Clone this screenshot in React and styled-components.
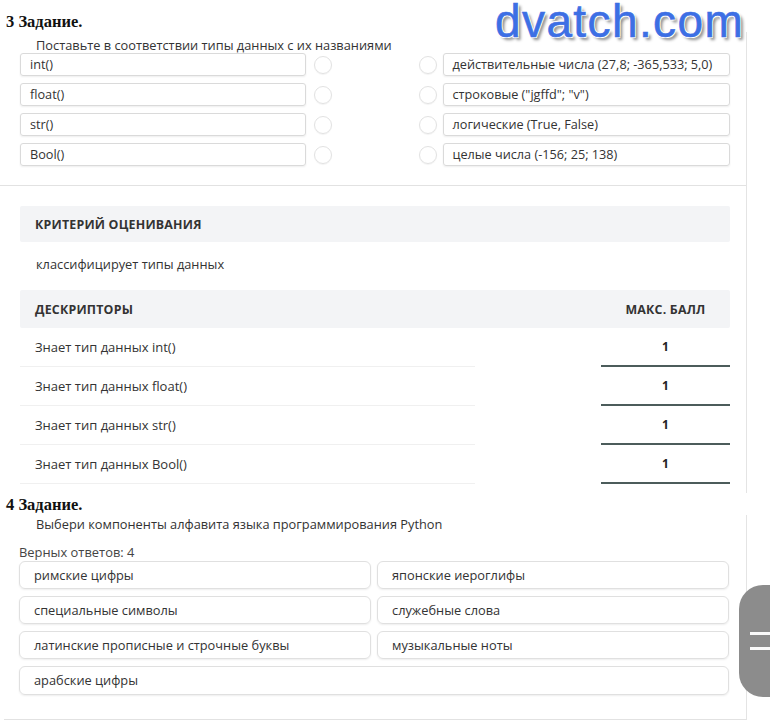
import React from "react";
import styled, { createGlobalStyle } from "styled-components";

const GlobalStyle = createGlobalStyle`
  html, body { margin: 0; padding: 0; background: #fff; }
  body { font-family: "Open Sans", "Noto Sans", sans-serif; color: #333; }
  * { box-sizing: border-box; }
`;

const Page = styled.div`
  position: relative;
  width: 770px;
  height: 725px;
  overflow: hidden;
  background: #fff;
`;

const TaskHeading = styled.h3`
  margin: 0;
  padding: ${(p) => p.$top}px 0 0 6px;
  height: ${(p) => p.$height}px;
  font: bold 16.5px/20px "Liberation Serif", "Times New Roman", serif;
  color: #111;
`;

const Card = styled.section`
  margin-left: 4px;
  width: 743px;
  border-right: 1px solid #e4e4e4;
  ${(p) => p.$bottom && "border-bottom: 1px solid #e2e2e2;"}
  padding: ${(p) => p.$pad};
`;

const MatchBlock = styled.div`
  border-bottom: 1px solid #e2e2e2;
  padding: 5px 16px 19px 16px;
  margin-left: -4px;
  padding-left: 20px;
`;

const Instruction = styled.p`
  margin: 0 0 0 ${(p) => p.$indent}px;
  font-size: 12.8px;
  line-height: 16px;
  color: #333;
`;

const MatchGrid = styled.div`
  display: grid;
  grid-template-columns: 1fr 1fr;
  column-gap: 87px;
  row-gap: 7px;
`;

const MatchCell = styled.div`
  display: flex;
  align-items: center;
  gap: ${(p) => (p.$right ? 6 : 8)}px;
`;

const MatchBox = styled.div`
  flex: 1;
  height: 23px;
  border: 1px solid #dadada;
  border-radius: 3px;
  box-shadow: 0 1px 2px rgba(0, 0, 0, 0.07);
  padding: 0 9px;
  font-size: 12.7px;
  line-height: 21px;
  color: #333;
  white-space: nowrap;
`;

const Circle = styled.span`
  width: 18px;
  height: 18px;
  flex: none;
  border-radius: 50%;
  border: 1px solid #e2e2e2;
  box-shadow: 0 1px 1px rgba(0, 0, 0, 0.05);
`;

const Criteria = styled.div`
  padding: 20px 16px 9px 16px;
`;

const HeaderBar = styled.div`
  display: grid;
  grid-template-columns: 1fr 129px;
  align-items: center;
  height: ${(p) => p.$h}px;
  background: #f3f4f6;
  border-radius: 2px;
  font-size: 12.4px;
  font-weight: 700;
  letter-spacing: 0.2px;
  text-transform: uppercase;
  color: #333;
`;

const HeaderLabel = styled.span`
  padding-left: 15px;
`;

const HeaderScore = styled.span`
  text-align: center;
`;

const CriterionText = styled.p`
  margin: 0;
  padding: 12px 16px 16px;
  font-size: 12.8px;
  line-height: 20px;
`;

const DescTable = styled.div`
  display: grid;
  grid-template-columns: 1fr 129px;
`;

const DescCell = styled.div`
  height: 39px;
  display: flex;
  align-items: center;
  padding-left: 15px;
  border-bottom: 1px solid #f0f0f0;
  margin-right: 126px;
  font-size: 13px;
  color: #333;
`;

const ScoreCell = styled.div`
  height: 39px;
  display: flex;
  align-items: center;
  justify-content: center;
  padding-bottom: 1px;
  border-bottom: 2px solid #4c5c5b;
  font-size: 12px;
  font-weight: 700;
  color: #222;
`;

const Hint = styled.p`
  margin: 12px 0 1px 0;
  font-size: 12.9px;
  line-height: 16px;
  color: #444;
`;

const OptionGrid = styled.div`
  display: grid;
  grid-template-columns: 1fr 1fr;
  gap: 7px 6px;
`;

const Option = styled.div`
  grid-column: ${(p) => (p.$wide ? "1 / -1" : "auto")};
  height: ${(p) => (p.$wide ? 29 : 28)}px;
  border: 1px solid #e0e0e0;
  border-radius: 6px;
  box-shadow: 0 1px 2px rgba(0, 0, 0, 0.07);
  padding-left: 14px;
  font-size: 12.8px;
  line-height: 26px;
  color: #333;
`;

const Watermark = styled.div`
  position: absolute;
  top: 0;
  left: 495px;
  font-family: "Liberation Sans", Arial, sans-serif;
  font-size: 46px;
  line-height: 42px;
  letter-spacing: 1.4px;
  color: #3d6fe4;
  -webkit-text-stroke: 0.6px #3d6fe4;
  text-shadow: -1px -1px 0 #fff, 1px -1px 0 #fff, -1px 1px 0 #fff,
    1px 1px 0 #fff, 3px 3px 3px rgba(0, 0, 0, 0.45);
`;

const FloatButton = styled.div`
  position: absolute;
  top: 585px;
  left: 739px;
  width: 40px;
  height: 112px;
  background: #8c8c8c;
  border-radius: 24px 0 0 24px;
  display: flex;
  flex-direction: column;
  justify-content: center;
  gap: 12px;
  padding-left: 11px;
`;

const Bar = styled.span`
  display: block;
  width: 24px;
  height: 3px;
  background: #fafafa;
`;

const matchLeft = ["int()", "float()", "str()", "Bool()"];
const matchRight = [
  "действительные числа (27,8; -365,533; 5,0)",
  'строковые ("jgffd"; "v")',
  "логические (True, False)",
  "целые числа (-156; 25; 138)",
];
const descriptors = ["int()", "float()", "str()", "Bool()"];
const options = [
  "римские цифры",
  "японские иероглифы",
  "специальные символы",
  "служебные слова",
  "латинские прописные и строчные буквы",
  "музыкальные ноты",
];

export default function App() {
  return (
    <Page>
      <GlobalStyle />
      <TaskHeading $top={12} $height={32}>3 Задание.</TaskHeading>
      <Card $pad="0">
        <MatchBlock>
          <Instruction $indent={16}>
            Поставьте в соответствии типы данных с их названиями
          </Instruction>
          <MatchGrid>
            {matchLeft.map((l, i) => (
              <React.Fragment key={l}>
                <MatchCell>
                  <MatchBox>{l}</MatchBox>
                  <Circle />
                </MatchCell>
                <MatchCell $right>
                  <Circle />
                  <MatchBox>{matchRight[i]}</MatchBox>
                </MatchCell>
              </React.Fragment>
            ))}
          </MatchGrid>
        </MatchBlock>
        <Criteria>
          <HeaderBar $h={36}>
            <HeaderLabel>Критерий оценивания</HeaderLabel>
          </HeaderBar>
          <CriterionText>классифицирует типы данных</CriterionText>
          <HeaderBar $h={38}>
            <HeaderLabel>Дескрипторы</HeaderLabel>
            <HeaderScore>Макс. балл</HeaderScore>
          </HeaderBar>
          <DescTable>
            {descriptors.map((d) => (
              <React.Fragment key={d}>
                <DescCell>Знает тип данных {d}</DescCell>
                <ScoreCell>1</ScoreCell>
              </React.Fragment>
            ))}
          </DescTable>
        </Criteria>
      </Card>
      <TaskHeading $top={2} $height={22}>4 Задание.</TaskHeading>
      <Card $bottom $pad="1px 17px 24px 15px">
        <Instruction $indent={17}>
          Выбери компоненты алфавита языка программирования Python
        </Instruction>
        <Hint>Верных ответов: 4</Hint>
        <OptionGrid>
          {options.map((o) => (
            <Option key={o}>{o}</Option>
          ))}
          <Option $wide>арабские цифры</Option>
        </OptionGrid>
      </Card>
      <Watermark>dvatch.com</Watermark>
      <FloatButton>
        <Bar />
        <Bar />
      </FloatButton>
    </Page>
  );
}
